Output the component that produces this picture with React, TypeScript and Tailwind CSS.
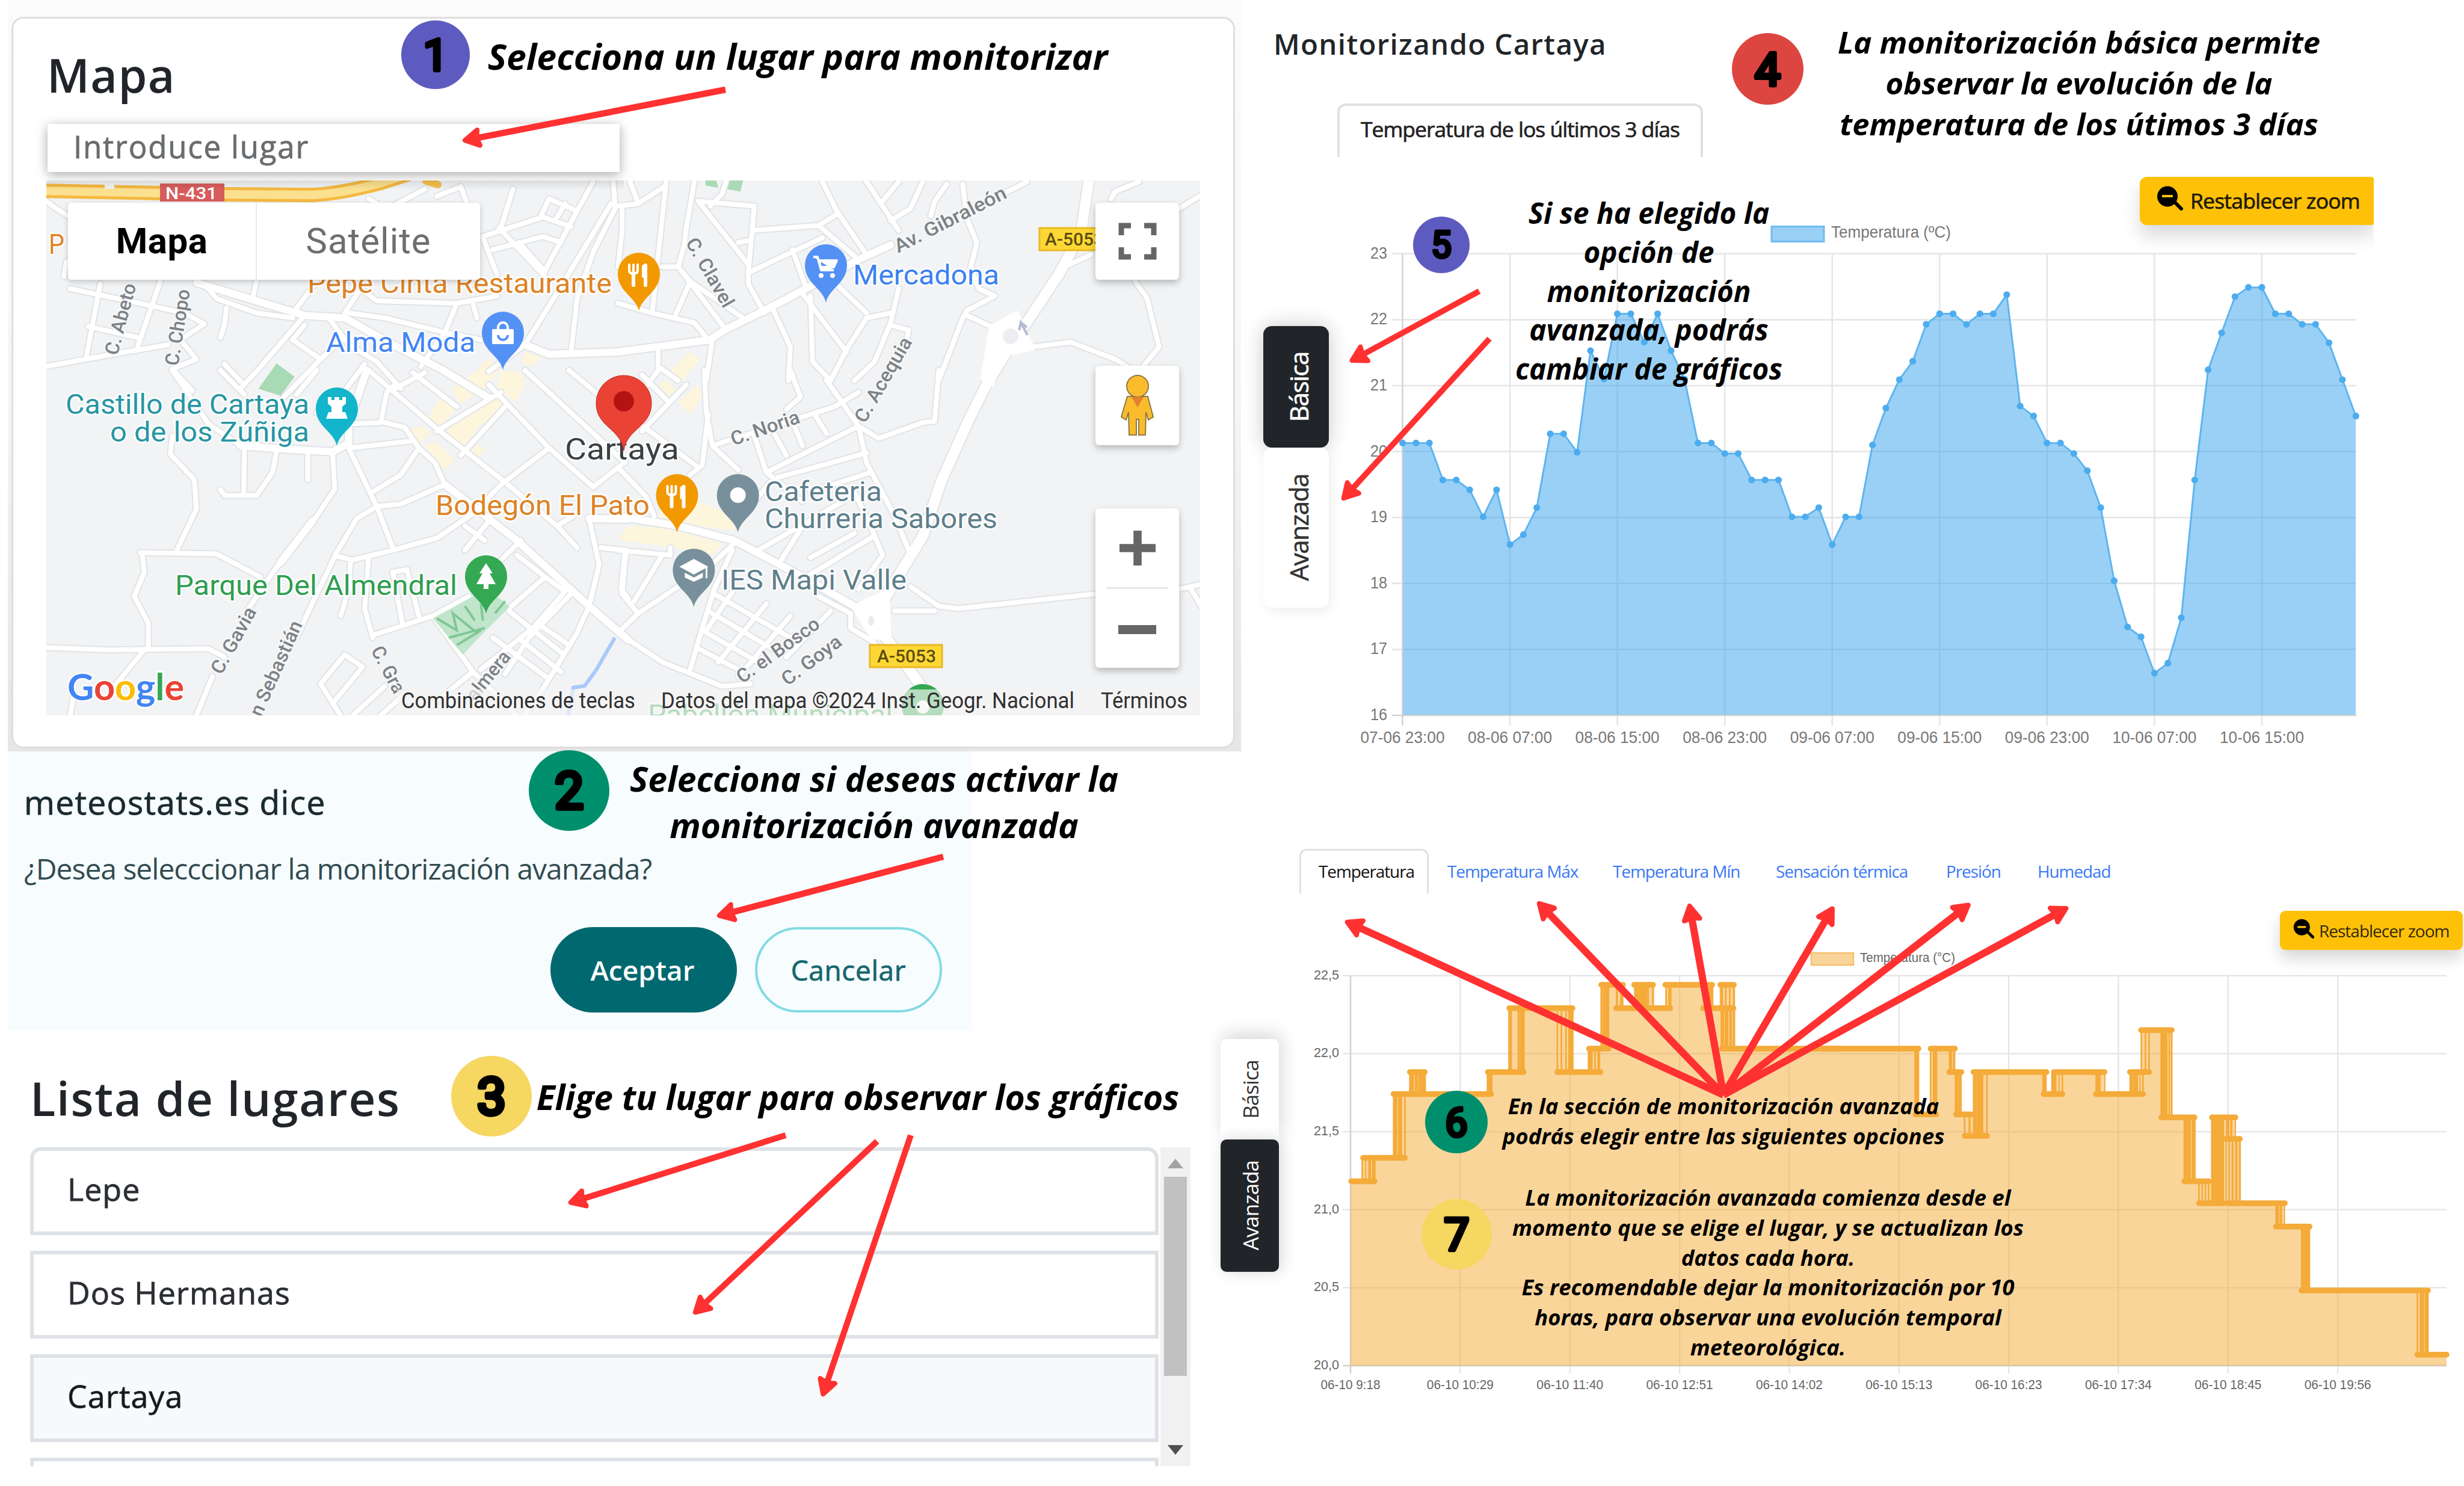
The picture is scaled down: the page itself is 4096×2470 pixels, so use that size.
import React from "react";

/* ---------- shared pieces ---------- */

function Badge({ n, className, fill }: { n: string; className: string; fill: string }) {
  return (
    <svg viewBox="0 0 100 100" className={"absolute " + className}>
      <circle cx="50" cy="50" r="50" fill={fill} />
      <text
        x="50"
        y="72.7"
        textAnchor="middle"
        className="font-['Roboto',sans-serif] text-[64px] font-normal not-italic"
        fill="#000"
        stroke="#000"
        strokeWidth="5.5"
        strokeLinejoin="round"
        strokeLinecap="round"
      >
        {n}
      </text>
    </svg>
  );
}

/* [x1, y1, x2, y2, line width] */
const ARROWS: [number, number, number, number, number][] = [
  [1206, 149, 769, 234, 10.5],
  [1568, 1424, 1192, 1523, 10.5],
  [1306, 1887, 945, 2000, 10],
  [1458, 1897, 1153, 2184, 10],
  [1514, 1887, 1367, 2321, 10],
  [2459, 484, 2244, 601, 9.6],
  [2476, 563, 2231, 831, 9.6],
  [2865, 1820, 2236, 1531, 12],
  [2865, 1820, 2556, 1499, 12],
  [2865, 1820, 2808, 1502, 12],
  [2865, 1820, 3048, 1507, 12],
  [2865, 1820, 3275, 1502, 12],
  [2865, 1820, 3438, 1508, 12],
];

function Arrows() {
  return (
    <svg viewBox="0 0 4096 2470" className="pointer-events-none absolute inset-0 h-[2470px] w-[4096px]">
      {ARROWS.map(([x1, y1, x2, y2, w], i) => {
        const a = (Math.atan2(y2 - y1, x2 - x1) * 180) / Math.PI;
        const len = Math.hypot(x2 - x1, y2 - y1);
        return (
          <g key={i} transform={`translate(${x1} ${y1}) rotate(${a})`} fill="#ff3131">
            <rect x="0" y={-w / 2} width={len - 18} height={w} />
            <path
              d={`M${len - 4} 0 L${len - 27} -13 Q${len - 23} 0 ${len - 27} 13 Z`}
              stroke="#ff3131"
              strokeWidth="8"
              strokeLinejoin="round"
            />
          </g>
        );
      })}
    </svg>
  );
}

function ZoomOutIcon({ className }: { className: string }) {
  return (
    <svg viewBox="0 0 44 42" className={className}>
      <path d="M28 25 L41 38" stroke="#000" strokeWidth="6" strokeLinecap="round" />
      <circle cx="18" cy="17.5" r="17" fill="#000" />
      <rect x="9" y="15" width="18" height="4" rx="1" fill="#ffc107" />
    </svg>
  );
}

/* ---------- map ---------- */

type Tile = { t: string; roads: string; thick: string; blobs: string };

const TILES: Tile[] = [
  {
    t: "translate(0 0) scale(.6662 .4041)",
    roads:
      "M115 830 L140 860 L170 890 M160 1140 L165 1080 L200 1050 M1060 780 L980 850 M1090 810 L1150 770 L1165 840 M920 820 L940 840 M1280 780 L1250 940 M1205 975 L1355 895 L1425 935 M1350 890 L1370 820 L1440 870 M1410 840 L1385 910 M1480 750 L1440 870 L1355 1130 M1525 840 L1400 1180 L1310 1420 L1220 1530 M1530 740 L1535 860 L1480 1040 L1440 1230 L1425 1450 M1245 940 L1360 1140 M1230 1030 L1355 975 L1400 1000 M1295 1000 L1360 1120 M1205 980 L1240 1130 M115 1510 L230 1475 L420 1420 M215 1475 L250 1170 M340 1445 L400 1160 M175 1190 L320 1240 L460 1290 L510 1335 L450 1400 L490 1480 L430 1520 L480 1610 M220 1345 L340 1390 M760 1300 L640 1530 L600 1600 M520 1190 L540 1230 L640 1290 L730 1310 M565 1270 L560 1340 L550 1390 M640 1160 L630 1230 M740 1270 L790 1160 M860 1290 L900 1190 L940 1240 L1140 1250 L1240 1220 M870 1290 L960 1310 L1110 1370 L1200 1400 M1140 1250 L1110 1370 L1050 1510 M1180 1250 L1190 1310 M820 1310 L870 1420 L940 1490 L1000 1600 M760 1340 L730 1400 L800 1480 L850 1400 M800 1480 L700 1650 M910 1500 L860 1610 L790 1700 M560 1500 L600 1570",
    thick: "M490 1165 L620 1230 L760 1300 L860 1310 L980 1420 L1100 1520 L1220 1640 M1310 1420 L1370 1460 L1545 1450",
    blobs: "M1310 1450 L1350 1470 L1325 1510 L1300 1490Z M1215 1480 L1250 1510 L1230 1560 L1190 1525Z",
  },
  {
    t: "translate(1027.5 0) scale(.6662 .4041)",
    roads:
      "M0 850 L50 840 L115 770 M30 750 L50 840 M10 850 L10 950 L0 1100 M120 745 L110 900 L85 1290 M190 750 L170 940 L165 1010 L150 1100 L265 1350 M200 830 L340 850 L335 940 L325 1120 L325 1170 L365 1290 M230 850 L260 800 L270 745 M200 830 L325 1090 M300 1000 L330 990 M335 950 L500 930 L550 880 M500 930 L600 1070 M510 750 L545 870 L620 1050 M620 750 L700 950 M700 750 L660 830 M760 750 L730 860 L680 910 M1020 750 L960 800 M820 760 L790 830 L780 890 M860 760 L870 900 L895 1000 L880 1100 L900 1190 L940 1220 L870 1280 L860 1310 L800 1568 M110 1100 L150 1100 L180 1160 L320 1320 M180 1160 L140 1310 M0 1250 L85 1290 L190 1330 L225 1400 M235 1400 L220 1568 M100 1440 L100 1510 L150 1568 M385 1270 L430 1430 L425 1568 M460 1210 L570 1450 M480 1220 L485 1490 L530 1568 M700 1190 L680 1330 L640 1490 L590 1568 M550 1180 L620 1290 M680 1290 L620 1310 L570 1440 L530 1568 M680 1340 L725 1360 L720 1400 M435 1030 L470 1190 M330 1120 L510 980 M1180 1050 L1100 1110 M870 1300 L950 1360 M1030 1430 L1130 1410 L1240 1480 L1290 1530 M1290 1160 L1320 1230 L1350 1430 L1310 1510 M1230 820 L1240 790 L1300 750 M1400 860 L1455 805",
    thick: "M680 1010 L600 1070 L480 1180 L365 1280 L265 1360 L230 1400 L0 1450",
    blobs: "M135 1520 L175 1450 L205 1480 L160 1568 L130 1568Z",
  },
  {
    t: "translate(0 616.5) scale(.6662 .4041)",
    roads:
      "M430 0 L520 220 L600 310 M550 0 L610 100 M790 0 L740 100 M870 220 L950 215 L965 90 L985 60 M960 215 L1010 235 L1045 320 L1085 380 L1110 470 M870 320 L1030 290 M1045 320 L1000 430 L930 500 M870 320 L940 560 L980 730 M1110 470 L1000 550 L940 560 L890 610 L840 750 L790 920 L740 1100 M830 335 L835 490 L790 600 L690 810 L620 980 M690 330 L680 420 L640 515 L560 515 L550 490 M610 320 L608 515 M768 340 L768 450 M430 270 L425 345 L485 450 L490 570 L440 745 M350 750 L540 755 L650 850 M355 755 L360 830 L335 930 L370 1040 L370 1140 M115 1140 L270 1150 L520 1145 L560 1180 M360 1150 L290 1290 M185 1330 L175 1420 M530 1260 L490 1420 M840 765 L880 780 L980 740 L1090 690 L1180 590 L1250 470 L1370 320 M875 780 L870 900 L850 1010 M920 770 L910 980 L930 1100 M1005 1050 L980 830 L1015 820 L1045 1010 M930 1090 L1080 1010 L1170 930 M1080 1010 L1180 1240 L1290 1420 M830 1370 L905 1220 L860 1170 L800 1290 L850 1420 M1180 1240 L1060 1400 M1300 700 L1250 780 M1290 760 L1360 850 L1410 910 L1330 1060 L1200 1230 M1360 850 L1270 980 M1270 990 L1400 1160 M1430 910 L1320 1100 L1260 1250 M1470 970 L1440 1080 L1370 1270 L1310 1420 M1230 1100 L1370 1270 M1160 740 L1220 620 M1300 1110 L1400 1240 M1340 1040 L1420 1130 M1210 700 L1160 640 M920 0 L1090 240 L1260 460 L1390 640 L1440 730 M1390 640 L1430 600 M1310 0 L1560 380 M1220 60 L1370 320 L1480 480 L1550 390 M1060 10 L980 80 M1140 150 L1030 10 M1250 90 L1090 250 M1260 150 L1150 350 M1420 0 L1500 110 M1470 610 L1495 800 L1470 970 M1500 730 L1560 740 L1550 900 L1568 940 M880 1420 L960 1300 M950 1420 L1010 1330",
    thick:
      "M600 310 L720 325 L830 335 L870 300 L870 220 L915 0 M1110 470 L1290 700 L1470 970 L1568 1110 M780 620 L700 790 M1470 610 L1568 612",
    blobs:
      "M1190 0 L1240 10 L1205 80 L1150 140 L1125 80Z M1070 190 L1100 110 L1140 160 L1090 240Z M1230 90 L1260 150 L1190 240 L1150 330 L1105 260Z M1020 240 L1060 230 L1075 260 L1045 300Z M1060 310 L1085 290 L1135 370 L1110 410Z M1165 350 L1190 305 L1210 325 L1190 370Z M1250 0 L1300 10 L1310 60 L1285 130 L1240 65Z M1545 690 L1568 640 L1568 710Z",
  },
  {
    t: "translate(1027.5 616.5) scale(.6662 .4041)",
    roads:
      "M0 1080 L50 1000 L240 790 L290 710 M0 400 L70 520 L90 600 M215 0 L220 170 L235 310 L300 410 M225 180 L210 390 L180 430 M235 310 L540 150 L600 90 M520 40 L600 230 L620 380 L690 600 L730 760 M340 270 L370 420 L600 230 M390 260 L420 350 M440 230 L460 310 M490 180 L520 260 M370 420 L460 540 M400 440 L620 340 M480 500 L630 420 M560 540 L350 740 M640 680 L470 850 M640 680 L660 760 L600 900 M400 800 L460 640 M480 770 L590 670 M590 500 L640 680 M430 0 L455 110 L420 160 M600 230 L650 280 L760 215 L790 210 L800 0 M730 890 L800 970 L850 980 L1190 920 M690 990 L790 990 M1400 900 L1455 880 M1430 900 L1455 970 M285 740 L240 900 L210 1060 L180 1230 M0 1080 L110 1200 L260 1300 L330 1290 M240 920 L440 1110 M225 990 L400 1160 M210 1070 L350 1200 M195 1140 L310 1240 M290 900 L220 1070 M370 960 L250 1200 M430 1010 L300 1260 M530 990 L420 1180 M0 740 L130 760 L130 730 M20 740 L10 920 L50 1000 M110 760 L40 950 M500 930 L580 1000 L580 1060 L640 1120 M300 620 L380 460 M100 0 L20 180 M170 60 L60 250 M20 180 L120 300 L200 400 M60 20 L120 120",
    thick: "M0 600 L150 640 L290 700 L450 840 L600 980",
    blobs:
      "M0 690 L30 640 L120 650 L190 680 L262 712 L240 755 L130 730 L20 700Z M90 600 L130 560 L200 540 L290 600 L290 660 L200 640Z M150 130 L200 60 L210 110 L180 180Z M100 60 L120 40 L145 80 L125 105Z",
  },
];

const PIN = "M0 62 C-5 38 -35 30 -35 0 A35 35 0 1 1 35 0 C35 30 5 38 0 62Z";

function Pin({ x, y, fill, children }: { x: number; y: number; fill: string; children?: React.ReactNode }) {
  return (
    <g transform={`translate(${x} ${y})`}>
      <path d={PIN} fill={fill} />
      {children}
    </g>
  );
}

function Cutlery() {
  return (
    <g stroke="#fff" fill="none" strokeLinecap="round">
      <path d="M-9 0 V19" strokeWidth="6" />
      <path d="M-16 -15 V-6 Q-16 0 -9 0 Q-2 0 -2 -6 V-15 M-9 -15 V0" strokeWidth="4" />
      <path d="M11 -14 V19" strokeWidth="6" />
      <path d="M8 -12 V4" strokeWidth="6" />
    </g>
  );
}

const PLACES: [string, number, number, number, string][] = [
  ["P", 81, 423, 26, "#dd8326"],
  ["Pepe Cinta Restaurante", 511, 488, 506, "#dd8326"],
  ["Alma Moda", 542, 586, 248, "#4285f4"],
  ["Mercadona", 1418, 474, 243, "#3b82f0"],
  ["Castillo de Cartaya", 109, 689, 405, "#2796a3"],
  ["o de los Zúñiga", 183, 735, 331, "#2796a3"],
  ["Bodegón El Pato", 724, 857, 356, "#dd8326"],
  ["Cafeteria", 1271, 834, 195, "#5f7f8c"],
  ["Churreria Sabores", 1271, 879, 387, "#5f7f8c"],
  ["IES Mapi Valle", 1199, 981, 308, "#5f7f8c"],
  ["Parque Del Almendral", 291, 990, 469, "#2f9e50"],
];

const STREETS: [string, number, number, number, number][] = [
  ["C. Abeto", 195, 593, -75, 122],
  ["C. Chopo", 296, 610, -81, 128],
  ["Av. Gibraleón", 1493, 422, -27, 205],
  ["C. Clavel", 1139, 404, 60, 128],
  ["C. Acequia", 1438, 706, -60, 158],
  ["C. Noria", 1219, 742, -19, 119],
  ["C. Gavia", 368, 1124, -61, 122],
  ["n Sebastián", 434, 1194, -66, 170],
  ["C. Gra", 616, 1082, 62, 84],
  ["almera", 790, 1168, -51, 96],
  ["C. el Bosco", 1234, 1138, -36, 162],
  ["C. Goya", 1309, 1142, -37, 116],
];

const HIGHWAY =
  "M1810 301 L1797 388 L1760 457 L1715 525 L1680 575 L1640 640 L1610 700 L1565 800 L1534 892 L1490 964 L1450 1032 L1487 1080 L1530 1140 L1560 1190";
const NATIONAL = "M70 318 L373 324 L520 325 Q565 323 630 306 L680 290";

function MapArt() {
  return (
    <svg viewBox="77 301 1918 889" className="absolute inset-0 h-[889px] w-[1918px]">
      <rect x="77" y="301" width="1918" height="889" fill="#f1f3f4" />
      <g transform={TILES[0].t}>
        <path d="M690 1497 L735 1552 L700 1630 L645 1602Z" fill="#a8dab5" />
      </g>
      <g transform={TILES[1].t}>
        <path d="M218 745 L245 745 L250 775 L218 765Z M272 745 L312 745 L305 790 L270 780Z" fill="#a8dab5" />
      </g>
      {TILES.map((t) => (
        <g key={t.t} transform={t.t}>
          <path d={t.blobs} fill="#fdf5dc" />
        </g>
      ))}
      {TILES.map((t) => (
        <g key={t.t} transform={t.t} fill="none" stroke="#e1e3e6" strokeLinejoin="round" strokeLinecap="round">
          <path d={t.roads} strokeWidth="12" vectorEffect="non-scaling-stroke" />
          <path d={t.thick} strokeWidth="16" vectorEffect="non-scaling-stroke" />
        </g>
      ))}
      <path d={HIGHWAY} fill="none" stroke="#e1e3e6" strokeWidth="21" strokeLinejoin="round" />
      {TILES.map((t) => (
        <g key={t.t} transform={t.t} fill="none" stroke="#fff" strokeLinejoin="round" strokeLinecap="round">
          <path d={t.roads} strokeWidth="8" vectorEffect="non-scaling-stroke" />
          <path d={t.thick} strokeWidth="12" vectorEffect="non-scaling-stroke" />
        </g>
      ))}
      <path d={HIGHWAY} fill="none" stroke="#fff" strokeWidth="17" strokeLinejoin="round" />
      <path
        d="M1648 545 L1690 522 L1716 580 L1665 590 L1648 640 L1634 630Z M1420 1010 L1474 985 L1478 1060 L1450 1060Z"
        fill="#fff"
        stroke="#fff"
        strokeWidth="8"
        strokeLinejoin="round"
      />
      <circle cx="1680" cy="560" r="13" fill="#eceef1" />
      <path d="M1708 558 L1697 537 L1694 550 M1697 537 L1707 545" stroke="#b4bad0" strokeWidth="4" fill="none" />
      <ellipse cx="1448" cy="1033" rx="5" ry="8" fill="#e8eaed" />

      <g fill="none">
        <path d={NATIONAL} stroke="#f5b942" strokeWidth="24" />
        <path d={NATIONAL} stroke="#fbe08f" strokeWidth="14" />
        <path d="M708 302 L728 308" stroke="#f5c04e" strokeWidth="12" strokeLinecap="round" />
        <path d="M182 301 V315" stroke="#f1f3f4" strokeWidth="16" />
      </g>
      <path d="M1022 1061 L992 1113 L972 1141 L953 1144 L944 1190" fill="none" stroke="#a9c9fa" strokeWidth="6" />

      <g transform={TILES[2].t}>
        <path d="M1080 1020 L1180 930 L1240 930 L1272 972 L1200 1090 L1155 1170Z" fill="#c0e5ca" />
        <path
          d="M1090 1020 L1140 1070 L1130 1000 L1190 1080 M1120 1100 L1210 1060 M1160 970 L1185 1030 M1200 960 L1205 1030 M1235 1000 L1260 950 M1140 1130 L1200 1070"
          fill="none"
          stroke="#7fc795"
          strokeWidth="4"
          vectorEffect="non-scaling-stroke"
        />
      </g>

      <g fontFamily="Roboto, sans-serif" fontSize="32" fill="#7d8287" fontWeight="500" stroke="#f6f7f8" strokeWidth="5" paintOrder="stroke">
        {STREETS.map(([s, x, y, a, w]) => (
          <text key={s} transform={`translate(${x} ${y}) rotate(${a})`} textLength={w} lengthAdjust="spacingAndGlyphs">
            {s}
          </text>
        ))}
      </g>

      <g fontFamily="Roboto, sans-serif" fontWeight="500">
        <rect x="266" y="306" width="107" height="30" fill="#d65c5b" />
        <text x="275" y="332" fontSize="28" fill="#fff" textLength="86" lengthAdjust="spacingAndGlyphs">
          N-431
        </text>
        <rect x="1728" y="380" width="122" height="37" fill="#fdd835" stroke="#e9b825" strokeWidth="3" />
        <text x="1737" y="409" fontSize="30" fill="#5d4d10" textLength="98" lengthAdjust="spacingAndGlyphs">
          A-5053
        </text>
        <rect x="1446" y="1073" width="120" height="37" fill="#fdd835" stroke="#e9b825" strokeWidth="3" />
        <text x="1458" y="1102" fontSize="30" fill="#5d4d10" textLength="98" lengthAdjust="spacingAndGlyphs">
          A-5053
        </text>
      </g>

      <g fontFamily="Roboto, sans-serif" fontSize="46" stroke="#fff" strokeWidth="5" strokeLinejoin="round" paintOrder="stroke">
        {PLACES.map(([s, x, y, w, c]) => (
          <text key={s} x={x} y={y} fill={c} textLength={w} lengthAdjust="spacingAndGlyphs">
            {s}
          </text>
        ))}
        <text x="939" y="765" fontSize="50" fill="#3c4043" textLength="190" lengthAdjust="spacingAndGlyphs">
          Cartaya
        </text>
        <text x="1077" y="1205" fill="#34a853" textLength="407" lengthAdjust="spacingAndGlyphs">
          Pabellón Municipal
        </text>
      </g>

      <Pin x={1062} y={456} fill="#f29900">
        <Cutlery />
      </Pin>
      <Pin x={1125.5} y={824} fill="#f29900">
        <Cutlery />
      </Pin>
      <Pin x={1373} y={442} fill="#5491f5">
        <path d="M-21 -14 H-14 L-8 8 H13 M-11 -8 H18 L13 3 H-9Z" fill="#fff" stroke="#fff" strokeWidth="4" strokeLinejoin="round" />
        <circle cx="-8" cy="17" r="4" fill="#fff" />
        <circle cx="11" cy="17" r="4" fill="#fff" />
      </Pin>
      <Pin x={836} y={554} fill="#5491f5">
        <rect x="-18" y="-6" width="36" height="25" rx="2" fill="#fff" />
        <path d="M-8 -5 V-9 A8 8 0 0 1 8 -9 V-5" fill="none" stroke="#fff" strokeWidth="4" />
        <path d="M-8 4 A8 8 0 0 0 8 4" fill="none" stroke="#5491f5" strokeWidth="4" />
      </Pin>
      <Pin x={560} y={680} fill="#12b5cb">
        <path d="M-15 -19 H-9 V-14 H-4 V-19 H4 V-14 H9 V-19 H15 V-8 L9 -3 V6 H14 L18 17 H-18 L-14 6 H-9 V-3 L-15 -8Z" fill="#fff" />
      </Pin>
      <Pin x={808} y={959} fill="#34a853">
        <path d="M0 -22 L11 -5 H6 L16 13 H4 V21 H-4 V13 H-16 L-6 -5 H-11Z" fill="#fff" />
      </Pin>
      <Pin x={1226.7} y={824} fill="#78909c">
        <circle r="13" fill="#fff" />
      </Pin>
      <Pin x={1153.4} y={948} fill="#78909c">
        <path d="M-24 -5 L0 -18 L24 -5 L0 8Z M-15 5 L0 13 L15 5 V13 L0 20 L-15 13Z" fill="#fff" />
        <path d="M21 -5 V14" stroke="#fff" strokeWidth="3" />
      </Pin>
      <Pin x={1534} y={1173} fill="#34a853">
        <circle r="11" cy="3" fill="#fff" />
      </Pin>
      <g transform="translate(1037 671)">
        <path d="M0 79 C-5 42 -46 40 -46 0 A46 46 0 1 1 46 0 C46 40 5 42 0 79Z" fill="#ea4335" stroke="#c5221f" strokeWidth="1" />
        <circle r="17" cy="-3" fill="#b31412" />
      </g>

      <rect x="660" y="1147" width="1335" height="43" fill="#f5f5f5" fillOpacity=".68" />
      <g fontFamily="Roboto, sans-serif" fontSize="37" fill="#303030">
        <text x="667" y="1178" textLength="389" lengthAdjust="spacingAndGlyphs">
          Combinaciones de teclas
        </text>
        <text x="1099" y="1178" textLength="687" lengthAdjust="spacingAndGlyphs">
          Datos del mapa ©2024 Inst. Geogr. Nacional
        </text>
        <text x="1830" y="1178" textLength="144" lengthAdjust="spacingAndGlyphs">
          Términos
        </text>
      </g>
      <text
        x="112"
        y="1165"
        fontFamily="Lato, sans-serif"
        fontWeight="700"
        fontSize="62"
        textLength="194"
        lengthAdjust="spacingAndGlyphs"
        stroke="#fff"
        strokeWidth="5"
        paintOrder="stroke"
      >
        <tspan fill="#4285f4">G</tspan>
        <tspan fill="#ea4335">o</tspan>
        <tspan fill="#fbbc04">o</tspan>
        <tspan fill="#4285f4">g</tspan>
        <tspan fill="#34a853">l</tspan>
        <tspan fill="#ea4335">e</tspan>
      </text>
    </svg>
  );
}

function MapControls() {
  const box = "flex w-[139px] items-center justify-center rounded-[6px] bg-white shadow-[0_5px_12px_rgba(0,0,0,0.25)]";
  return (
    <>
      <div className="absolute left-[36px] top-[37px] flex h-[128px] w-[685px] rounded-[5px] bg-white font-['Roboto',sans-serif] text-[60px] leading-[128px] shadow-[0_3px_10px_rgba(0,0,0,0.2)]">
        <div className="w-[314px] border-r-2 border-[#e8e8e8] text-center font-bold tracking-[0.5px] text-black">Mapa</div>
        <div className="flex-1 text-center tracking-[1px] text-[#6e6e6e]">Satélite</div>
      </div>
      <div className="absolute right-[35px] top-[37px] flex flex-col">
        <div className={box + " h-[128px]"}>
          <svg viewBox="0 0 64 62" className="h-[62px] w-[64px]">
            <path d="M5 21 V5 H21 M43 5 H59 V21 M59 41 V57 H43 M21 57 H5 V41" fill="none" stroke="#666" strokeWidth="9" />
          </svg>
        </div>
        <div className={box + " mt-[143px] h-[132px]"}>
          <svg viewBox="0 0 60 102" className="h-[102px] w-[60px]">
            <g fill="#fbbc2c" stroke="#8f7a45" strokeWidth="2">
              <path d="M13 36 H47 L56 70 L48 75 L44 62 L43 100 H32 V74 H28 V100 H16 L15 62 L11 75 L3 70Z" />
              <circle cx="30" cy="19" r="18" />
            </g>
            <path d="M20 37 H40 L30 54Z" fill="#e2812f" />
          </svg>
        </div>
        <div className={box + " mt-[105px] h-[265px] flex-col"}>
          <div className="flex flex-1 items-center justify-center">
            <svg viewBox="0 0 64 64" className="h-[62px] w-[64px]">
              <path d="M32 2 V62 M1 32 H63" stroke="#666" strokeWidth="14" />
            </svg>
          </div>
          <div className="h-[3px] w-[103px] bg-[#e6e6e6]" />
          <div className="flex flex-1 items-center justify-center">
            <div className="mt-[4px] h-[15px] w-[63px] bg-[#666]" />
          </div>
        </div>
      </div>
    </>
  );
}

function MapSection() {
  return (
    <section className="ml-[13px] h-[1249px] w-[2050px] bg-[linear-gradient(180deg,#fbfbfc_0%,#f7f7f9_50%,#ededee_75%,#e6e6e7_100%)] pl-[6px] pt-[28px]">
      <div className="h-[1216px] w-[2034px] rounded-[20px] border-[3px] border-[#dedede] bg-white pl-[55px]">
        <h2 className="mt-[54px] h-[80px] font-['Open_Sans',sans-serif] text-[77px] font-semibold leading-[80px] text-[#212529]">
          <span className="ml-px tracking-[1.4px]">Mapa</span>
        </h2>
        <div className="ml-[2px] mt-[41px] flex h-[80px] w-[951px] items-center bg-white pb-[6px] pl-[43px] font-['Open_Sans',sans-serif] text-[51px] leading-[70px] text-[#6a6d70] shadow-[0_4px_18px_rgba(0,0,0,0.35)]">
          <span className="tracking-[1.8px] [-webkit-text-stroke:0.8px_#6a6d70]">Introduce lugar</span>
        </div>
        <div className="relative mt-[14px] h-[889px] w-[1918px] overflow-hidden">
          <MapArt />
          <MapControls />
          <div className="absolute left-0 top-0 h-[16px] w-[960px] bg-[linear-gradient(180deg,rgba(0,0,0,0.1),rgba(0,0,0,0))]" />
        </div>
      </div>
    </section>
  );
}

/* ---------- dialog ---------- */

function Dialog() {
  return (
    <section className="ml-[13px] flex h-[464px] w-[1602px] flex-col bg-[#f7fdff] pl-[27px] font-['Open_Sans',sans-serif]">
      <p className="mt-[49px] h-[70px] whitespace-nowrap text-[55px] leading-[70px] tracking-[1.3px] text-[#1b2b2f] [-webkit-text-stroke:0.8px_#1b2b2f]">
        meteostats.es dice
      </p>
      <p className="mt-[41px] h-[70px] whitespace-nowrap text-[48px] leading-[70px] tracking-[-1px] text-[#324b50]">
        ¿Desea selecccionar la monitorización avanzada?
      </p>
      <div className="ml-[875px] mt-[62px] flex gap-[30px] text-[46px]">
        <button className="h-[142px] w-[310px] rounded-full bg-[#00696f] pr-[4px] font-semibold tracking-[0px] text-white">
          Aceptar
        </button>
        <button className="h-[142px] w-[311px] rounded-full border-[4px] border-[#83dbe2] tracking-[0.6px] text-[#17676d] [-webkit-text-stroke:0.8px_#17676d]">
          Cancelar
        </button>
      </div>
    </section>
  );
}

/* ---------- list ---------- */

function PlaceList() {
  const item = "flex h-[146px] shrink-0 items-center border-[6px] border-[#dee2e6] pb-[8px] pl-[56px]";
  return (
    <section className="flex flex-col pl-[50px]">
      <h2 className="mt-[72px] h-[80px] whitespace-nowrap font-['Open_Sans',sans-serif] text-[78px] font-semibold leading-[80px] tracking-[1.7px] text-[#212529]">
        Lista de lugares
      </h2>
      <div className="mt-[42px] flex h-[530px] w-[1929px] overflow-hidden font-['Open_Sans',sans-serif] text-[52px] tracking-[1px] text-[#2b2f33] [-webkit-text-stroke:0.8px_#2b2f33]">
        <div className="flex w-[1876px] flex-col gap-[26px]">
          <div className={item + " rounded-t-[18px]"}>Lepe</div>
          <div className={item}>Dos Hermanas</div>
          <div className={item + " bg-[#f8f9fa] text-[#16181b]"}>Cartaya</div>
          <div className={item} />
        </div>
        <div className="ml-[3px] flex w-[50px] flex-col items-center bg-[#f1f1f1]">
          <svg viewBox="0 0 26 16" className="mt-[19px] h-[16px] w-[26px]">
            <path d="M13 0 L26 16 H0Z" fill="#a3a3a3" />
          </svg>
          <div className="mt-[14px] h-[331px] w-[38px] bg-[#c1c1c1]" />
          <svg viewBox="0 0 26 16" className="mt-[115px] h-[16px] w-[26px]">
            <path d="M0 0 H26 L13 16Z" fill="#505050" />
          </svg>
        </div>
      </div>
    </section>
  );
}

/* ---------- charts ---------- */

const TEMPS = [
  20.13, 20.13, 20.13, 19.57, 19.57, 19.42, 19.01, 19.42, 18.59, 18.74, 19.15, 20.27, 20.27, 19.99, 21.53, 21.1, 22.09,
  22.09, 21.66, 22.09, 21.53, 21.1, 20.13, 20.13, 19.97, 19.97, 19.57, 19.57, 19.57, 19.01, 19.01, 19.15, 18.59, 19.01,
  19.01, 20.1, 20.66, 21.09, 21.37, 21.93, 22.09, 22.09, 21.93, 22.09, 22.09, 22.38, 20.69, 20.54, 20.13, 20.13, 19.97,
  19.71, 19.15, 18.04, 17.34, 17.19, 16.64, 16.79, 17.48, 19.57, 21.24, 21.8, 22.35, 22.49, 22.49, 22.09, 22.09, 21.93,
  21.93, 21.65, 21.09, 20.54,
];
const HOURS = ["07-06 23:00", "08-06 07:00", "08-06 15:00", "08-06 23:00", "09-06 07:00", "09-06 15:00", "09-06 23:00", "10-06 07:00", "10-06 15:00"];

function BasicChart() {
  const px = (i: number) => 2331.5 + i * 22.32;
  const py = (v: number) => 1189 - (v - 16) * 109.6;
  const pts = TEMPS.map((v, i) => `${px(i).toFixed(1)} ${py(v).toFixed(1)}`);
  return (
    <svg viewBox="2230 374 1866 876" className="h-[876px] w-[1866px] shrink-0">
      <g stroke="#e5e5e5" strokeWidth="2.5">
        {[16, 17, 18, 19, 20, 21, 22, 23].map((v) => (
          <path key={v} d={`M2314 ${py(v)} H3917`} />
        ))}
        {HOURS.map((h, i) => (
          <path key={h} d={`M${px(i * 8)} 422 V1206`} />
        ))}
      </g>
      <path d={`M${pts.join(" L")} L3916 1189 L2331.5 1189Z`} fill="#36a2eb" fillOpacity=".5" />
      <path d={`M${pts.join(" L")}`} fill="none" stroke="#5db5f0" strokeWidth="3" />
      <path d="M2331.5 422 V1206" stroke="#cfcfcf" strokeWidth="2" />
      <path d="M2314 1189 H3917" stroke="#cfcfcf" strokeWidth="2" />
      <g fill="#4dacee">
        {TEMPS.map((v, i) => (
          <circle key={i} cx={px(i)} cy={py(v)} r="5.6" />
        ))}
      </g>
      <rect x="2945" y="376.5" width="87" height="25" fill="#9ad0f5" stroke="#6dbbf0" strokeWidth="3" />
      <g fontFamily="'Liberation Sans', Arial, sans-serif" fontSize="27" fill="#777">
        <text x="3044" y="395" textLength="199" lengthAdjust="spacingAndGlyphs">
          Temperatura (ºC)
        </text>
        {[16, 17, 18, 19, 20, 21, 22, 23].map((v) => (
          <text key={v} x="2278" y={py(v) + 8} textLength="28" lengthAdjust="spacingAndGlyphs">
            {v}
          </text>
        ))}
        {HOURS.map((h, i) => (
          <text key={h} x={px(i * 8) - 70} y="1235" textLength="140" lengthAdjust="spacingAndGlyphs">
            {h}
          </text>
        ))}
      </g>
    </svg>
  );
}

const HALF_A = { ox: 2012, sx: 0.6826 };
const HALF_B = { ox: 3039.5, sx: 0.6738 };

const AREA_A: [number, number][] = [
  [370, 945], [446, 883], [486, 714], [524, 656], [676, 714], [726, 656], [884, 487], [922, 656], [950, 594],
  [1005, 425], [1032, 487], [1080, 425], [1108, 487], [1222, 425], [1240, 487], [1278, 425],
];
const AREA_B: [number, number][] = [
  [222, 594], [252, 768], [312, 594], [328, 656], [356, 768], [538, 656], [552, 714], [681, 656], [744, 714],
  [771, 656], [847, 545], [903, 776], [944, 945], [1004, 776], [1017, 833], [1126, 1003], [1187, 1065], [1480, 1234],
  [1525, 1404],
];
const FLAT_A: [number, number, number][] = [
  [343, 400, 945], [372, 474, 883], [446, 684, 714], [486, 522, 656], [676, 763, 656], [728, 882, 487],
  [845, 950, 656], [922, 970, 594], [952, 1005, 425], [988, 1120, 487], [1032, 1078, 425], [1108, 1222, 425],
  [1200, 1274, 487], [1242, 1275, 425], [1246, 1530, 594],
];
const FLAT_B: [number, number, number][] = [
  [-30, 222, 594], [215, 266, 768], [252, 312, 594], [298, 328, 656], [315, 352, 768], [336, 391, 825],
  [358, 538, 656], [531, 577, 714], [556, 681, 656], [660, 776, 714], [744, 791, 656], [771, 847, 545],
  [821, 903, 776], [878, 938, 945], [914, 975, 1003], [946, 1004, 776], [980, 1015, 833], [985, 1126, 1003],
  [1104, 1187, 1065], [1167, 1479, 1234], [1453, 1525, 1404],
];
const DROP_A: [number, number, number, number][] = [
  [370, 4, 883, 945], [378, 3, 883, 945], [388, 7, 883, 945], [398, 9, 883, 945],
  [450, 11, 714, 883], [462, 10, 714, 883], [474, 4, 714, 883],
  [490, 12, 656, 714], [502, 8, 656, 714], [510, 6, 656, 714], [519, 12, 656, 714],
  [680, 14, 656, 714], [730, 9, 487, 656], [751, 6, 487, 656], [760, 11, 487, 656],
  [845, 4, 487, 656], [855, 4, 487, 656], [866, 4, 487, 656], [878, 13, 487, 656],
  [925, 12, 594, 656], [937, 4, 594, 656], [946, 7, 594, 656], [953, 6, 425, 594], [964, 15, 425, 594],
  [990, 5, 425, 487], [1002, 8, 425, 487], [1040, 16, 425, 487], [1055, 18, 425, 487], [1066, 4, 425, 487],
  [1078, 5, 425, 487], [1110, 4, 425, 487], [1119, 8, 425, 487], [1204, 4, 425, 487], [1219, 12, 425, 487],
  [1245, 7, 425, 487], [1255, 4, 425, 487], [1265, 4, 425, 487], [1275, 5, 425, 487],
  [1247, 9, 487, 594], [1257, 9, 487, 594], [1267, 7, 487, 594], [1275, 6, 487, 594],
];
const DROP_B: [number, number, number, number][] = [
  [218, 12, 594, 768], [252, 4, 594, 768], [263, 11, 594, 768], [301, 8, 594, 656], [310, 6, 594, 656],
  [316, 9, 656, 768], [325, 8, 656, 768], [336, 4, 768, 825], [348, 5, 768, 825],
  [361, 9, 656, 825], [370, 9, 656, 825], [378, 8, 656, 825], [391, 4, 656, 825],
  [533, 11, 656, 714], [556, 13, 656, 714], [569, 3, 656, 714], [577, 4, 656, 714], [665, 13, 656, 714],
  [682, 3, 656, 714], [747, 9, 656, 714], [758, 12, 656, 714], [769, 3, 656, 714], [776, 4, 656, 714],
  [772, 4, 545, 656], [782, 4, 545, 656], [791, 4, 545, 656], [823, 8, 545, 776], [831, 11, 545, 776],
  [841, 4, 545, 776], [847, 4, 545, 776], [880, 8, 776, 945], [889, 11, 776, 945], [901, 10, 776, 945],
  [914, 4, 945, 1003], [922, 4, 945, 1003], [930, 4, 945, 1003], [938, 4, 945, 1003],
  [949, 10, 776, 1003], [960, 15, 776, 1003], [971, 10, 776, 1003], [985, 8, 776, 833], [994, 5, 776, 833],
  [1004, 3, 776, 833], [981, 3, 833, 1003], [989, 3, 833, 1003], [997, 5, 833, 1003], [1006, 6, 833, 1003],
  [1015, 5, 833, 1003], [1107, 9, 1003, 1065], [1116, 6, 1003, 1065], [1125, 3, 1003, 1065],
  [1177, 23, 1065, 1234], [1453, 4, 1234, 1404], [1464, 11, 1234, 1404], [1476, 10, 1234, 1404],
];
const LEVELS = ["20,0", "20,5", "21,0", "21,5", "22,0", "22,5"];
const TIMES = ["06-10 9:18", "06-10 10:29", "06-10 11:40", "06-10 12:51", "06-10 14:02", "06-10 15:13", "06-10 16:23", "06-10 17:34", "06-10 18:45", "06-10 19:56"];

function AdvancedChart() {
  const y = (v: number) => 1370 + v * 0.628;
  const xa = (v: number) => HALF_A.ox + v * HALF_A.sx;
  const xb = (v: number) => HALF_B.ox + v * HALF_B.sx;
  const tx = (i: number) => 2245 + i * 182.35;
  const area =
    "M2245 2270 " +
    AREA_A.map(([x, l]) => `V${y(l)} H${xa(x)}`).join(" ") +
    " " +
    AREA_B.map(([x, l]) => `V${y(l)} H${xb(x)}`).join(" ") +
    " V2270Z";
  return (
    <svg viewBox="2145 1579 1951 741" className="h-[741px] w-[1951px] shrink-0">
      <g stroke="#e5e5e5" strokeWidth="2.3">
        {LEVELS.map((l, i) => (
          <path key={l} d={`M2232 ${2270 - i * 129.65} H4067`} />
        ))}
        {TIMES.map((t, i) => (
          <path key={t} d={`M${tx(i)} 1622 V2283`} />
        ))}
      </g>
      <path d="M2245 1622 V2283 M2232 2270 H4067" stroke="#d2d2d2" strokeWidth="2.5" />
      <path d={area} fill="#f5ab36" fillOpacity=".5" />
      <g fill="#f5ab3a">
        {DROP_A.map(([x, w, a, b], i) => (
          <rect key={i} x={xa(x - w / 2)} width={w * HALF_A.sx} y={y(a)} height={y(b) - y(a)} />
        ))}
        {DROP_B.map(([x, w, a, b], i) => (
          <rect key={i} x={xb(x - w / 2)} width={w * HALF_B.sx} y={y(a)} height={y(b) - y(a)} />
        ))}
      </g>
      <g stroke="#f5ab3a" strokeWidth="9.5" strokeLinecap="round">
        {FLAT_A.map(([a, b, l], i) => (
          <path key={i} d={`M${xa(a)} ${y(l)} H${xa(b)}`} />
        ))}
        {FLAT_B.map(([a, b, l], i) => (
          <path key={i} d={`M${xb(a)} ${y(l)} H${xb(b)}`} />
        ))}
      </g>
      <rect x="3011" y="1584" width="70" height="20" fill="#fad59b" stroke="#f7c06b" strokeWidth="2.5" />
      <g fontFamily="'Liberation Sans', Arial, sans-serif" fontSize="22.5" fill="#666">
        <text x="3092" y="1599" textLength="158" lengthAdjust="spacingAndGlyphs">
          Temperatura (°C)
        </text>
        {LEVELS.map((l, i) => (
          <text key={l} x="2184" y={2276 - i * 129.65} textLength="42" lengthAdjust="spacingAndGlyphs">
            {l}
          </text>
        ))}
        {TIMES.map((t, i) => (
          <text key={t} x={tx(i) - (i ? 55.5 : 49.5)} y="2309" textLength={i ? 111 : 99} lengthAdjust="spacingAndGlyphs">
            {t}
          </text>
        ))}
      </g>
    </svg>
  );
}

function RightColumn() {
  return (
    <div className="relative flex h-[2470px] w-[2076px] shrink-0 flex-col">
      {/* basic monitoring */}
      <h2 className="ml-[97px] mt-[43px] h-[60px] whitespace-nowrap font-['Open_Sans',sans-serif] text-[47.5px] font-semibold leading-[60px] tracking-[1.3px] text-[#212529]">
        Monitorizando Cartaya
      </h2>
      <div className="ml-[203px] mt-[69px] flex h-[89px] w-[608px] justify-center rounded-t-[14px] border-x-[4px] border-t-[4px] border-[#dee2e6] bg-white font-['Open_Sans',sans-serif] text-[35.5px] leading-[77px] text-[#222]">
        <span className="whitespace-nowrap tracking-[-1px] [-webkit-text-stroke:0.7px_#222]">
          Temperatura de los últimos 3 días
        </span>
      </div>
      <div className="mr-[150px] mt-[33px] flex justify-end overflow-x-clip">
        <button className="flex h-[80px] w-[389px] items-center rounded-l-[12px] rounded-r-[4px] bg-[#ffc107] pl-[28px] font-['Open_Sans',sans-serif] text-[35.5px] text-[#20190a] shadow-[0_18px_30px_rgba(0,0,0,0.15)]">
          <ZoomOutIcon className="mb-[8px] h-[42px] w-[44px] shrink-0" />
          <span className="ml-[12px] whitespace-nowrap tracking-[-0.8px] [-webkit-text-stroke:0.7px_#20190a]">
            Restablecer zoom
          </span>
        </button>
      </div>
      <div className="flex h-[876px]">
        <div className="ml-[77px] mt-[168px] h-[490px] w-[133px] pl-[3px] pr-[21px] font-['Open_Sans',sans-serif] text-[42px] tracking-[-1.4px]">
          <div className="rounded-[14px] shadow-[0_0_34px_rgba(0,0,0,0.22)]">
            <div className="flex h-[202px] w-[109px] items-center justify-center rounded-[14px] bg-[#212529] pl-[7px] text-white [-webkit-text-stroke:0.6px_#fff]">
              <span className="rotate-180 [writing-mode:vertical-rl]">Básica</span>
            </div>
          </div>
          <div className="flex h-[266px] w-[109px] items-center justify-center rounded-[14px] bg-white pl-[7px] text-[#333] shadow-[4px_6px_20px_rgba(0,0,0,0.07)] [-webkit-text-stroke:0.6px_#333]">
            <span className="rotate-180 [writing-mode:vertical-rl]">Avanzada</span>
          </div>
        </div>
        <BasicChart />
      </div>

      {/* advanced monitoring */}
      <div className="ml-[140px] mt-[161px] flex h-[74px] whitespace-nowrap font-['Open_Sans',sans-serif] text-[28px] leading-[68px] tracking-[-1.1px] text-[#3a78f5]">
        <div className="w-[215px] rounded-t-[12px] border-x-[3px] border-t-[3px] border-[#dee2e6] pl-[29px] leading-[68px] text-[#111]">
          Temperatura
        </div>
        <div className="ml-[31px] w-[275px] pt-[3px]">Temperatura Máx</div>
        <div className="w-[271px] pt-[3px]">Temperatura Mín</div>
        <div className="w-[283px] pt-[3px]">Sensación térmica</div>
        <div className="w-[152px] pt-[3px]">Presión</div>
        <div className="pt-[3px]">Humedad</div>
      </div>
      <div className="mr-[2px] mt-[29px] flex justify-end">
        <button className="flex h-[65px] w-[304px] items-center rounded-[9px] bg-[#ffc107] pl-[22px] font-['Open_Sans',sans-serif] text-[28px] text-[#33290a] shadow-[0_14px_26px_rgba(0,0,0,0.16)]">
          <ZoomOutIcon className="mb-[6px] h-[34px] w-[35px] shrink-0" />
          <span className="ml-[8px] whitespace-nowrap tracking-[-1px]">Restablecer zoom</span>
        </button>
      </div>
      <div className="flex h-[741px]">
        <div className="ml-[9px] mt-[148px] flex h-[387px] w-[116px] flex-col font-['Open_Sans',sans-serif] text-[35px] tracking-[-1px]">
          <div className="flex h-[167px] w-[97px] items-center justify-center rounded-t-[10px] bg-white pl-[3px] text-[#333] shadow-[4px_-8px_30px_rgba(0,0,0,0.16)]">
            <span className="rotate-180 [writing-mode:vertical-rl]">Básica</span>
          </div>
          <div className="flex h-[220px] w-[97px] items-center justify-center rounded-[10px] bg-[#212529] pl-[3px] text-white shadow-[4px_0_26px_rgba(0,0,0,0.16)]">
            <span className="rotate-180 [writing-mode:vertical-rl]">Avanzada</span>
          </div>
        </div>
        <AdvancedChart />
      </div>
    </div>
  );
}

/* ---------- guide notes laid over the panels ---------- */

function Notes() {
  const note = "absolute -translate-x-1/2 whitespace-nowrap text-center";
  return (
    <div className="absolute inset-0 font-['Open_Sans',sans-serif] font-bold italic text-black">
      <Badge n="1" fill="#5e5bc0" className="left-[667px] top-[34px] size-[114px]" />
      <Badge n="2" fill="#008f6d" className="left-[879px] top-[1247px] size-[134px]" />
      <Badge n="3" fill="#f5d761" className="left-[750px] top-[1755px] size-[134px]" />
      <Badge n="4" fill="#dd4640" className="left-[2879px] top-[55px] size-[119px]" />
      <Badge n="5" fill="#5e5bc0" className="left-[2349px] top-[360px] size-[94px]" />
      <Badge n="6" fill="#008f6d" className="left-[2369px] top-[1813px] size-[104px]" />
      <Badge n="7" fill="#f5d761" className="left-[2363px] top-[1993px] size-[117px]" />

      <p className={note + " left-[1326px] top-[53px] text-[59px] leading-[80px]"}>Selecciona un lugar para monitorizar</p>
      <p className={note + " left-[1453px] top-[1256px] text-[57px] leading-[77px]"}>
        Selecciona si deseas activar la
        <br />
        monitorización avanzada
      </p>
      <p className={note + " left-[1426px] top-[1785px] text-[57px] leading-[77px]"}>
        Elige tu lugar para observar los gráficos
      </p>
      <p className={note + " left-[3456px] top-[36px] text-[50.8px] leading-[68px]"}>
        La monitorización básica permite
        <br />
        observar la evolución de la
        <br />
        temperatura de los útimos 3 días
      </p>
      <p className={note + " left-[2741px] top-[322px] text-[47.6px] leading-[64.8px]"}>
        Si se ha elegido la
        <br />
        opción de
        <br />
        monitorización
        <br />
        avanzada, podrás
        <br />
        cambiar de gráficos
      </p>
      <p className={note + " left-[2865px] top-[1813px] text-[36.5px] leading-[50px]"}>
        En la sección de monitorización avanzada
        <br />
        podrás elegir entre las siguientes opciones
      </p>
      <p className={note + " left-[2939px] top-[1966px] text-[36.4px] leading-[49.8px]"}>
        La monitorización avanzada comienza desde el
        <br />
        momento que se elige el lugar, y se actualizan los
        <br />
        datos cada hora.
        <br />
        Es recomendable dejar la monitorización por 10
        <br />
        horas, para observar una evolución temporal
        <br />
        meteorológica.
      </p>
    </div>
  );
}

export default function App() {
  return (
    <main className="relative flex h-[2470px] w-[4096px] overflow-hidden bg-white">
      <div className="flex w-[2020px] shrink-0 flex-col">
        <MapSection />
        <Dialog />
        <PlaceList />
      </div>
      <RightColumn />
      <Notes />
      <Arrows />
    </main>
  );
}
